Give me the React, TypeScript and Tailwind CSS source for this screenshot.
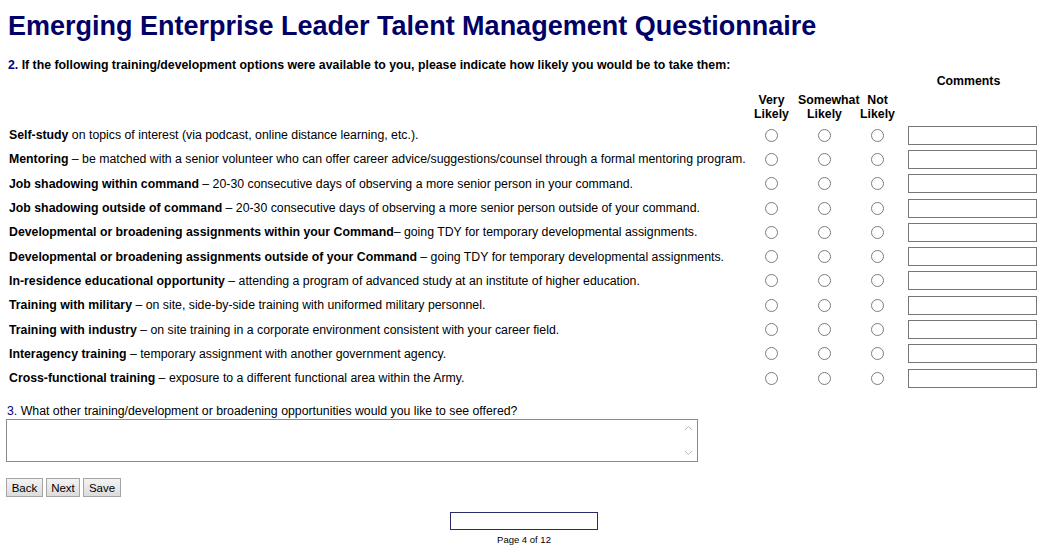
const ROWS: { bold: string; rest: string }[] = [
  { bold: "Self-study", rest: " on topics of interest (via podcast, online distance learning, etc.)." },
  { bold: "Mentoring", rest: " – be matched with a senior volunteer who can offer career advice/suggestions/counsel through a formal mentoring program." },
  { bold: "Job shadowing within command", rest: " – 20-30 consecutive days of observing a more senior person in your command." },
  { bold: "Job shadowing outside of command", rest: " – 20-30 consecutive days of observing a more senior person outside of your command." },
  { bold: "Developmental or broadening assignments within your Command", rest: "– going TDY for temporary developmental assignments." },
  { bold: "Developmental or broadening assignments outside of your Command", rest: " – going TDY for temporary developmental assignments." },
  { bold: "In-residence educational opportunity", rest: " – attending a program of advanced study at an institute of higher education." },
  { bold: "Training with military", rest: " – on site, side-by-side training with uniformed military personnel." },
  { bold: "Training with industry", rest: " – on site training in a corporate environment consistent with your career field." },
  { bold: "Interagency training", rest: " – temporary assignment with another government agency." },
  { bold: "Cross-functional training", rest: " – exposure to a different functional area within the Army." },
];

const CHOICES = ["very", "somewhat", "not"];

export default function App() {
  return (
    <div className="min-h-[553px] bg-white text-black font-['Liberation_Sans',Arial,sans-serif]">
      <h1 className="pl-[8px] pt-[8px] text-[27px] font-bold leading-[36px] text-[#000066]">
        Emerging Enterprise Leader Talent Management Questionnaire
      </h1>

      <p className="mt-[14px] pl-[8px] text-[12.3px] font-bold leading-[14px]">
        <span className="text-[#000080]">2.</span> If the following training/development options were available to you, please indicate how likely you would be to take them:
      </p>

      <div className="grid grid-cols-[745px_53px_53px_53px_1fr] items-center text-[12.3px] leading-[14px]">
        <div className="col-span-4" />
        <div className="pt-[2px] pr-[30px] text-center font-bold">Comments</div>

        <div className="col-span-5 h-[5px]" />
        <div />
        <div className="text-center font-bold">Very<br />Likely</div>
        <div className="text-center font-bold">Somewhat<br />Likely</div>
        <div className="text-center font-bold">Not<br />Likely</div>
        <div />
        <div className="col-span-5 h-[2px]" />

        {ROWS.map((r, i) => (
          <Row key={i} bold={r.bold} rest={r.rest} name={"q2_" + i} />
        ))}
      </div>

      <p className="mt-[14px] pl-[7px] text-[12.3px] leading-[14px]">
        <span className="text-[#000080]">3.</span> What other training/development or broadening opportunities would you like to see offered?
      </p>
      <div className="ml-[6px] mt-[1px] flex h-[43px] w-[692px] border border-[#8a8a8a] bg-white">
        <textarea className="h-full flex-1 resize-none bg-transparent outline-none" />
        <div className="flex w-[17px] flex-col items-center justify-between py-[5px] text-[#b8b8b8]">
          <svg width="9" height="6" viewBox="0 0 9 6"><path d="M1 5 L4.5 1.5 L8 5" fill="none" stroke="currentColor" strokeWidth="1" /></svg>
          <svg width="9" height="6" viewBox="0 0 9 6"><path d="M1 1 L4.5 4.5 L8 1" fill="none" stroke="currentColor" strokeWidth="1" /></svg>
        </div>
      </div>

      <div className="ml-[6px] mt-[16px] flex gap-[3px]">
        <Btn label="Back" w="w-[37px]" />
        <Btn label="Next" w="w-[34px]" />
        <Btn label="Save" w="w-[38px]" />
      </div>

      <div className="mt-[15px] flex flex-col items-center pl-[1px]">
        <div className="ml-[-16px] h-[18px] w-[148px] border border-[#2b2b6b]" />
        <p className="ml-[-16px] mt-[4px] text-[9.5px] leading-[12px]">Page 4 of 12</p>
      </div>
    </div>
  );
}

function Row({ bold, rest, name }: { bold: string; rest: string; name: string }) {
  return (
    <>
      <div className="flex h-[24.3px] items-center whitespace-nowrap pl-[9px]">
        <span>
          <b>{bold}</b>
          {rest}
        </span>
      </div>
      {CHOICES.map((c) => (
        <div key={c} className="flex h-[24.3px] items-center justify-center">
          <input
            type="radio"
            name={name}
            className="m-0 h-[13px] w-[13px] appearance-none rounded-full border border-[#7c7c7c] bg-white"
          />
        </div>
      ))}
      <div className="flex h-[24.3px] items-center pl-[4px]">
        <input
          type="text"
          className="h-[19px] w-[129px] border border-[#767676] bg-white outline-none"
        />
      </div>
    </>
  );
}

function Btn({ label, w }: { label: string; w: string }) {
  return (
    <button className={`${w} h-[19px] border border-[#a5a5a5] bg-gradient-to-b from-[#f3f3f3] to-[#dcdcdc] text-[11.5px] leading-[16px] text-black`}>
      {label}
    </button>
  );
}
